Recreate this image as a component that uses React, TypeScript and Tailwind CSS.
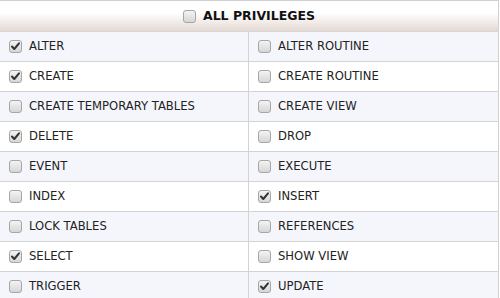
import React from "react";

const left: [string, boolean][] = [
  ["ALTER", true],
  ["CREATE", true],
  ["CREATE TEMPORARY TABLES", false],
  ["DELETE", true],
  ["EVENT", false],
  ["INDEX", false],
  ["LOCK TABLES", false],
  ["SELECT", true],
  ["TRIGGER", false],
];
const right: [string, boolean][] = [
  ["ALTER ROUTINE", false],
  ["CREATE ROUTINE", false],
  ["CREATE VIEW", false],
  ["DROP", false],
  ["EXECUTE", false],
  ["INSERT", true],
  ["REFERENCES", false],
  ["SHOW VIEW", false],
  ["UPDATE", true],
];

function Box({ checked }: { checked: boolean }) {
  return (
    <span className="relative inline-block w-[13px] h-[13px] shrink-0 rounded-[3px] border border-[#a6a6a6] bg-gradient-to-b from-[#f4f4f4] to-[#d6d6d6]">
      {checked && (
        <svg viewBox="0 0 13 13" className="absolute -left-px -top-px w-[13px] h-[13px]">
          <path d="M3 6.5 L5.3 9 L10 3.3" fill="none" stroke="#333" strokeWidth="2" strokeLinecap="round" strokeLinejoin="round" />
        </svg>
      )}
    </span>
  );
}

export default function App() {
  const rows = left.map((l, i) => [l, right[i]] as const);
  return (
    <div className="w-[499px] bg-white" style={{ fontFamily: "'DejaVu Sans', Verdana, sans-serif" }}>
      <div className="border-t border-r border-[#d0d0d0]">
        <div className="h-[31px] flex items-center justify-center gap-[7px] bg-gradient-to-b from-white from-40% to-[#e5d9d2] border-b border-[#d7d7d7]">
          <Box checked={false} />
          <span className="text-[12.5px] font-bold text-[#111]">ALL PRIVILEGES</span>
        </div>
        {rows.map(([l, r], i) => (
          <div
            key={i}
            className={`grid grid-cols-[249px_249px] h-[30px] border-b border-[#d3d3d3] ${i % 2 === 0 ? "bg-[#f5f6fc]" : "bg-white"}`}
          >
            <div className="flex items-center gap-[7px] pl-[9px] border-r border-[#d3d3d3]">
              <Box checked={l[1]} />
              <span className="text-[11.6px] text-[#222]">{l[0]}</span>
            </div>
            <div className="flex items-center gap-[7px] pl-[9px]">
              <Box checked={r[1]} />
              <span className="text-[11.6px] text-[#222]">{r[0]}</span>
            </div>
          </div>
        ))}
      </div>
    </div>
  );
}
